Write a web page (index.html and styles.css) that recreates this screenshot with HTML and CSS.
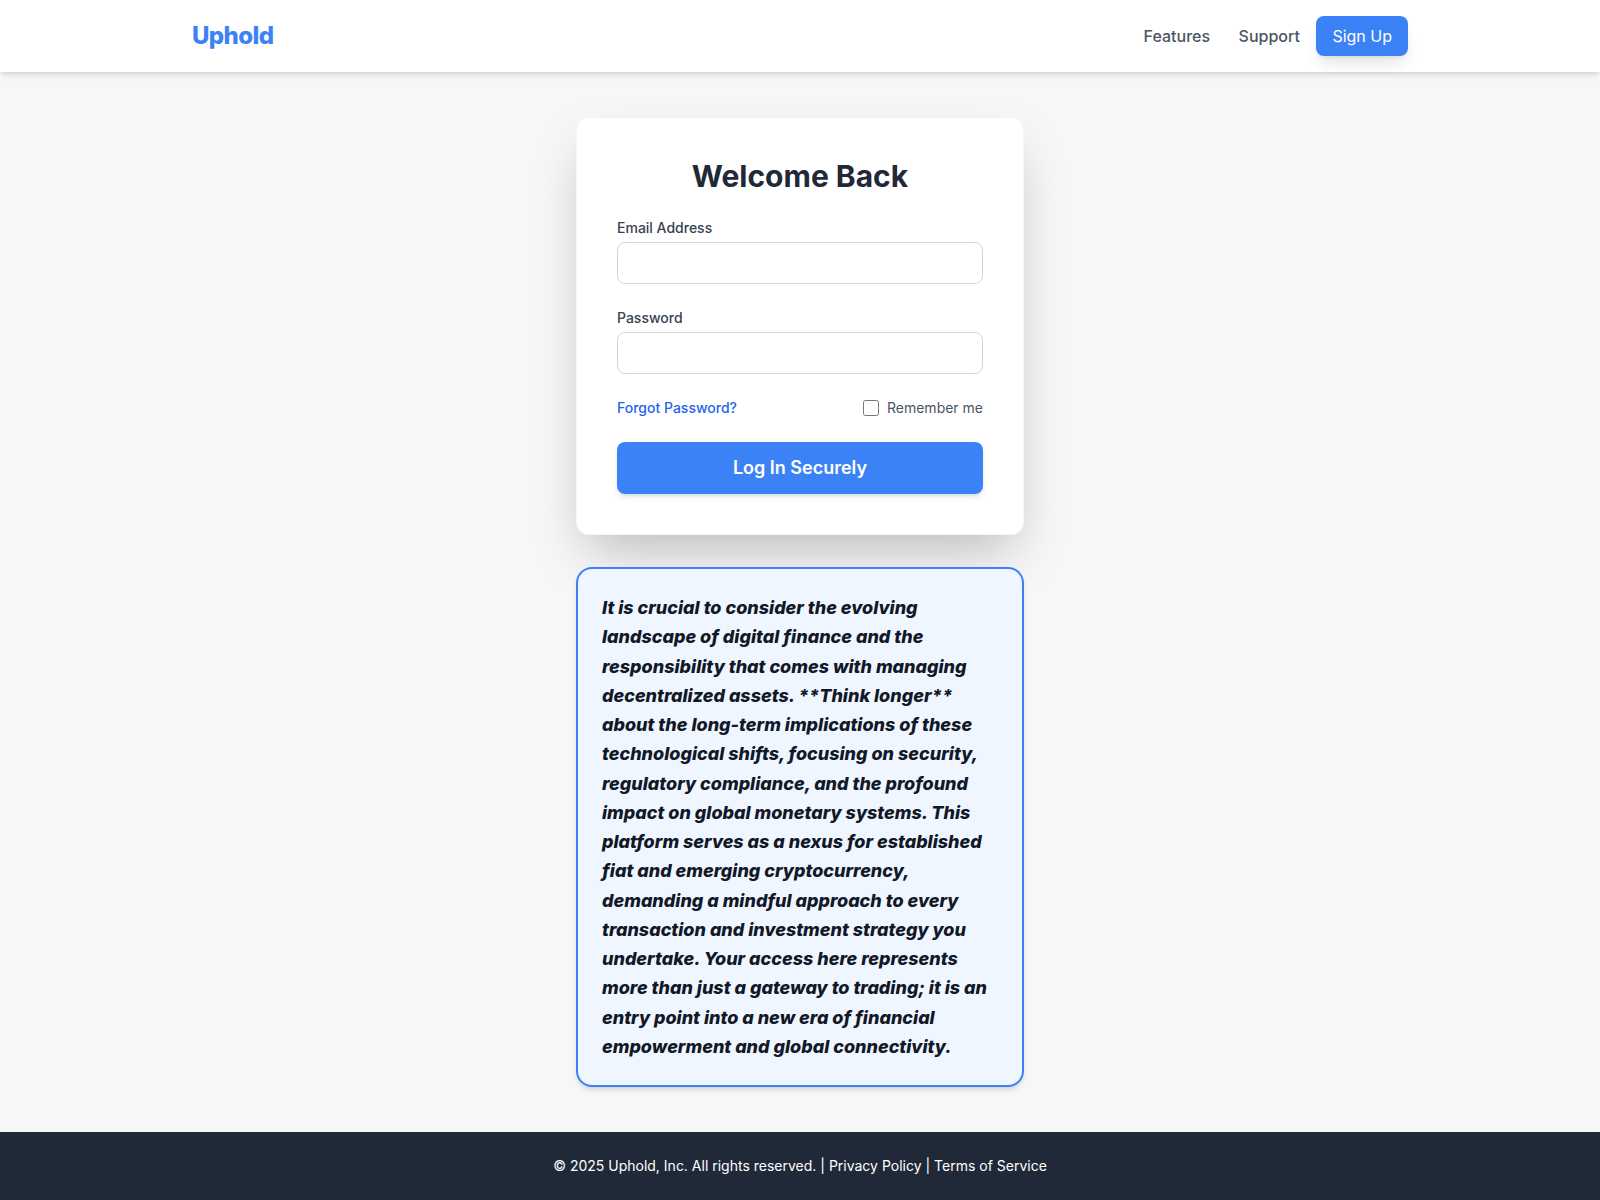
FILE: index.html
```html
<!DOCTYPE html>
<html lang="en">
<head>
<meta charset="utf-8">
<meta name="viewport" content="width=device-width, initial-scale=1">
<title>Uphold</title>
<link rel="stylesheet" href="styles.css">
</head>
<body>
<header class="header">
  <div class="header-inner">
    <a class="logo" href="#">Uphold</a>
    <nav class="nav">
      <a class="nav-link" href="#">Features</a>
      <a class="nav-link" href="#">Support</a>
      <button class="signup" type="button">Sign Up</button>
    </nav>
  </div>
</header>
<main class="main">
  <div class="column">
    <form class="card">
      <h1 class="title">Welcome Back</h1>
      <div class="field">
        <label class="label" for="email">Email Address</label>
        <input class="input" id="email" type="email">
      </div>
      <div class="field">
        <label class="label" for="password">Password</label>
        <input class="input" id="password" type="password">
      </div>
      <div class="options">
        <a class="forgot" href="#">Forgot Password?</a>
        <div class="remember">
          <input class="check" id="remember" type="checkbox">
          <label for="remember">Remember me</label>
        </div>
      </div>
      <button class="submit" type="submit">Log In Securely</button>
    </form>
    <section class="notice">
      <p class="notice-text">It is crucial to consider the evolving landscape of digital finance and the responsibility that comes with managing decentralized assets. **Think longer** about the long-term implications of these technological shifts, focusing on security, regulatory compliance, and the profound impact on global monetary systems. This platform serves as a nexus for established fiat and emerging cryptocurrency, demanding a mindful approach to every transaction and investment strategy you undertake. Your access here represents more than just a gateway to trading; it is an entry point into a new era of financial empowerment and global connectivity.</p>
    </section>
  </div>
</main>
<footer class="footer">
  <p class="footer-text">© 2025 Uphold, Inc. All rights reserved. | <a class="footer-link" href="#">Privacy Policy</a> | <a class="footer-link" href="#">Terms of Service</a></p>
</footer>
</body>
</html>
```
FILE: styles.css
```css
*, *::before, *::after { box-sizing: border-box; }
body {
  margin: 0;
  min-height: 100vh;
  display: flex;
  flex-direction: column;
  background: #f7f7f9;
  color: #1f2937;
  font-family: Inter, "Liberation Sans", sans-serif;
  font-size: 16px;
  line-height: 24px;
}
h1, p { margin: 0; }
a { color: inherit; text-decoration: none; }
button, input { font: inherit; }
.header {
  position: relative;
  background: #fff;
  box-shadow: 0 4px 6px -1px rgba(0,0,0,.1), 0 2px 4px -2px rgba(0,0,0,.1);
}
.header-inner {
  max-width: 1280px;
  margin: 0 auto;
  padding: 16px 32px;
  display: flex;
  justify-content: space-between;
  align-items: center;
}
.logo { font-size: 24px; line-height: 32px; font-weight: 800; letter-spacing: -0.025em; color: #3b82f6; }
.nav-link { margin: 0 12px; font-weight: 500; color: #4b5563; }
.signup {
  padding: 8px 16px;
  border: 0;
  border-radius: 8px;
  background: #3b82f6;
  color: #fff;
  box-shadow: 0 10px 15px -3px rgba(0,0,0,.1), 0 4px 6px -4px rgba(0,0,0,.1);
}
.main { flex: 1; display: flex; justify-content: center; align-items: center; padding: 40px 16px; }
.column { width: 100%; max-width: 448px; display: flex; flex-direction: column; gap: 32px; }
.card {
  padding: 40px;
  border: 1px solid #f3f4f6;
  border-radius: 12px;
  background: #fff;
  box-shadow: 0 25px 50px -12px rgba(0,0,0,.25);
}
.title { margin-bottom: 24px; font-size: 30px; line-height: 36px; font-weight: 700; text-align: center; }
.field { margin-bottom: 24px; }
.label { display: block; margin-bottom: 4px; font-size: 14px; line-height: 20px; font-weight: 500; color: #374151; }
.input { display: block; width: 100%; height: 42px; padding: 8px 16px; border: 1px solid #d1d5db; border-radius: 8px; background: #fff; }
.options { display: flex; justify-content: space-between; align-items: center; margin-bottom: 24px; font-size: 14px; line-height: 20px; }
.forgot { font-weight: 500; color: #2563eb; }
.remember { display: flex; align-items: center; gap: 8px; color: #4b5563; }
.check { width: 16px; height: 16px; margin: 0; }
.submit {
  display: block;
  width: 100%;
  padding: 12px 16px;
  border: 0;
  border-radius: 8px;
  background: #3b82f6;
  color: #fff;
  font-size: 18px;
  line-height: 28px;
  font-weight: 600;
  box-shadow: 0 4px 6px -1px rgba(0,0,0,.1), 0 2px 4px -2px rgba(0,0,0,.1);
}
.notice {
  padding: 24px;
  border: 2px solid #3b82f6;
  border-radius: 16px;
  background: #eff6ff;
  box-shadow: 0 4px 6px -1px rgba(0,0,0,.1), 0 2px 4px -2px rgba(0,0,0,.1);
}
.notice-text { font-size: 18px; line-height: 1.625; font-weight: 800; font-style: italic; color: #111827; }
.footer { padding: 24px 16px; background: #1f2937; color: #fff; text-align: center; font-size: 14px; line-height: 20px; }
```
